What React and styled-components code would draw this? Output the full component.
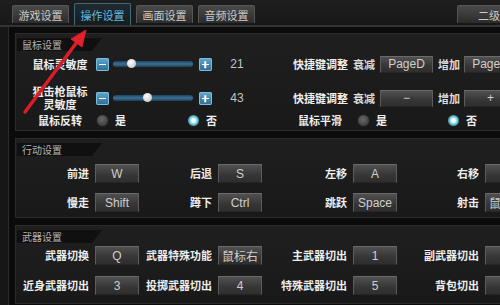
import styled, { createGlobalStyle } from "styled-components";

const GlobalStyle = createGlobalStyle`
  body {
    margin: 0;
    background: #0c0c0c;
    font-family: "Noto Sans CJK SC", "Noto Sans", sans-serif;
  }
`;

const Screen = styled.div`
  position: relative;
  width: 500px;
  height: 305px;
  overflow: hidden;
  background: #0b0b0b;
`;

const TabBar = styled.div`
  display: flex;
  align-items: flex-end;
  gap: 5px;
  width: 600px;
  height: 25px;
  padding-left: 12px;
  background: linear-gradient(#1e1e1e, #181818);
  border-bottom: 2px solid #343434;
`;

const Tab = styled.div`
  flex: none;
  box-sizing: border-box;
  width: ${(p) => p.$width || 57}px;
  height: ${(p) => (p.$active ? 22 : 18)}px;
  margin-bottom: ${(p) => (p.$active ? 0 : 2)}px;
  margin-left: ${(p) => p.$offset || 0}px;
  padding-left: ${(p) => p.$pl || 0}px;
  display: flex;
  align-items: center;
  justify-content: ${(p) => (p.$pl ? "flex-start" : "center")};
  font-size: 11px;
  color: ${(p) => (p.$active ? "#62bde6" : "#cacaca")};
  background: ${(p) =>
    p.$active
      ? "linear-gradient(#202b31, #151c20)"
      : "linear-gradient(#4a4a4a, #2b2b2b)"};
  border: 1px solid ${(p) => (p.$active ? "#3d6a7a" : "#555")};
  border-bottom: none;
  border-radius: 2px 2px 0 0;
`;

const Body = styled.div`
  display: flex;
  padding-top: 6px;
`;

const Rail = styled.div`
  flex: none;
  width: 8px;
  margin-top: -6px;
  height: 300px;
  background: #161616;
  border-right: 1px solid #2c2c2c;
`;

const Content = styled.div`
  display: flex;
  flex-direction: column;
  gap: 7px;
  width: 540px;
  margin-left: 6px;
`;

const Panel = styled.section`
  box-sizing: border-box;
  flex: none;
  display: flex;
  flex-direction: column;
  padding: 4px 0 ${(p) => p.$bottom || 4}px;
  background: linear-gradient(#1f1f1f, #191919);
  border: 1px solid #2b2b2b;
  border-right: none;
`;

const PanelTitle = styled.div`
  flex: none;
  width: 80px;
  height: 13px;
  margin-left: 1px;
  padding-left: 5px;
  font-size: 10px;
  line-height: 13px;
  color: #b4b4b4;
  background: #101010;
  clip-path: polygon(0 0, 100% 0, calc(100% - 10px) 100%, 0 100%);
`;

const Row = styled.div`
  flex: none;
  display: flex;
  align-items: center;
  height: ${(p) => p.$h || 18}px;
  margin-top: ${(p) => p.$mt || 0}px;
`;

const Label = styled.div`
  flex: none;
  box-sizing: border-box;
  width: ${(p) => p.$w}px;
  padding-left: ${(p) => p.$pl || 0}px;
  font-size: 11px;
  font-weight: 700;
  line-height: 13px;
  color: #eeeeee;
  text-align: ${(p) => p.$align || "center"};
  white-space: nowrap;
`;

const Small = styled.span`
  flex: none;
  margin-left: ${(p) => p.$ml || 0}px;
  font-size: 11px;
  font-weight: 700;
  color: #dcdcdc;
`;

const Step = styled.div`
  position: relative;
  flex: none;
  width: 13px;
  height: 13px;
  margin-left: ${(p) => p.$ml || 0}px;
  border-radius: 2px;
  background: linear-gradient(#62a8cf, #2b6b90);
  box-shadow: inset 0 0 0 1px #7cbbe0;
  &::before,
  &::after {
    content: "";
    position: absolute;
    left: 3px;
    top: 6px;
    width: 7px;
    height: 1.5px;
    background: #fff;
  }
  &::after {
    display: ${(p) => (p.$plus ? "block" : "none")};
    transform: rotate(90deg);
  }
`;

const Track = styled.div`
  position: relative;
  flex: none;
  width: 80px;
  height: 6px;
  margin-left: 4px;
  border-radius: 3px;
  background: linear-gradient(#1d435c, #3b7194 50%, #1b3d53);
`;

const Thumb = styled.div`
  position: absolute;
  top: -2px;
  width: 9px;
  height: 9px;
  margin-left: -4px;
  border-radius: 50%;
  background: radial-gradient(circle at 40% 35%, #ffffff, #b9b9b9);
`;

const Value = styled.div`
  flex: none;
  width: 50px;
  text-align: center;
  font-family: "Liberation Sans", sans-serif;
  font-size: 12px;
  color: #c4c4c4;
`;

const KeyButton = styled.div`
  flex: none;
  box-sizing: border-box;
  width: ${(p) => p.$w || 44}px;
  height: ${(p) => p.$h || 19}px;
  margin-left: ${(p) => p.$ml || 0}px;
  display: flex;
  align-items: center;
  justify-content: center;
  font-family: "Liberation Sans", "Noto Sans CJK SC", sans-serif;
  font-size: 12px;
  color: #cfcfcf;
  white-space: nowrap;
  overflow: hidden;
  background: linear-gradient(#505050, #363636 60%, #2e2e2e);
  border: 1px solid #5c5c5c;
  border-top-color: #6a6a6a;
  border-bottom-color: #262626;
`;

const RadioCell = styled.div`
  flex: none;
  display: flex;
  align-items: center;
  width: ${(p) => p.$w}px;
  padding-left: ${(p) => p.$pl || 0}px;
  box-sizing: border-box;
  gap: 7px;
  font-size: 11px;
  font-weight: 700;
  color: #eeeeee;
`;

const Radio = styled.span`
  flex: none;
  width: 11px;
  height: 11px;
  border-radius: 50%;
  box-shadow: 0 0 0 1px #202020;
  background: ${(p) =>
    p.$on
      ? "radial-gradient(circle, #f2feff 0 22%, #7fd4e6 45%, #2d6f82 80%)"
      : "radial-gradient(circle at 45% 40%, #6a6a6a, #3a3a3a 80%)"};
`;

const KeyGrid = styled.div`
  flex: none;
  display: grid;
  grid-template-columns: 79px 44px 79px 44px 91px 44px 88px 44px;
  grid-auto-rows: 19px;
  row-gap: ${(p) => p.$rowGap || 10}px;
  margin-top: ${(p) => p.$mt || 0}px;
  align-items: center;
`;

const KeyLabel = styled.div`
  padding-right: 6px;
  text-align: right;
  font-size: 11px;
  font-weight: 700;
  line-height: 13px;
  color: #eeeeee;
  white-space: nowrap;
`;

const Arrow = styled.svg`
  position: absolute;
  left: 0;
  top: 0;
  pointer-events: none;
`;

const moveKeys = [
  ["前进", "W"], ["后退", "S"], ["左移", "A"], ["右移", ""],
  ["慢走", "Shift"], ["蹲下", "Ctrl"], ["跳跃", "Space"], ["射击", "鼠标左"],
];

const weaponKeys = [
  ["武器切换", "Q"], ["武器特殊功能", "鼠标右"], ["主武器切出", "1"], ["副武器切出", ""],
  ["近身武器切出", "3"], ["投掷武器切出", "4"], ["特殊武器切出", "5"], ["背包切出", ""],
];

function SliderRow({ label, value, pos, minus, plus, h, mt }) {
  return (
    <Row $h={h} $mt={mt}>
      <Label $w={80} $pl={8}>{label}</Label>
      <Step />
      <Track>
        <Thumb style={{ left: `${pos}%` }} />
      </Track>
      <Step $ml={6} $plus />
      <Value>{value}</Value>
      <Label $w={85} $pl={31}>快捷键调整</Label>
      <Small $ml={6}>衰减</Small>
      <KeyButton $w={53} $h={17} $ml={5}>{minus}</KeyButton>
      <Small $ml={5}>增加</Small>
      <KeyButton $w={53} $h={17} $ml={4}>{plus}</KeyButton>
    </Row>
  );
}

function KeyPanel({ title, keys, mt, rowGap, bottom }) {
  return (
    <Panel $bottom={bottom}>
      <PanelTitle>{title}</PanelTitle>
      <KeyGrid $mt={mt} $rowGap={rowGap}>
        {keys.map(([label, key], i) => [
          <KeyLabel key={`l${i}`}>{label}</KeyLabel>,
          <KeyButton key={`k${i}`}>{key}</KeyButton>,
        ])}
      </KeyGrid>
    </Panel>
  );
}

export default function App() {
  return (
    <>
      <GlobalStyle />
      <Screen>
        <TabBar>
          <Tab>游戏设置</Tab>
          <Tab $active>操作设置</Tab>
          <Tab>画面设置</Tab>
          <Tab>音频设置</Tab>
          <Tab $offset={197} $width={84} $pl={20}>二级设置</Tab>
        </TabBar>
        <Body>
          <Rail />
          <Content>
            <Panel $bottom={3}>
              <PanelTitle>鼠标设置</PanelTitle>
              <SliderRow label="鼠标灵敏度" value="21" pos={22} minus="PageD" plus="PageU" h={18} mt={4} />
              <SliderRow
                label={<>狙击枪鼠标<br />灵敏度</>}
                value="43"
                pos={42}
                minus="−"
                plus="+"
                h={26}
                mt={12}
              />
              <Row $h={14} $mt={2}>
                <Label $w={80} $pl={8}>鼠标反转</Label>
                <RadioCell $w={92} $pl={1}><Radio />是</RadioCell>
                <RadioCell $w={105}><Radio $on />否</RadioCell>
                <Label $w={54}>鼠标平滑</Label>
                <RadioCell $w={101} $pl={11}><Radio />是</RadioCell>
                <RadioCell $w={80}><Radio $on />否</RadioCell>
              </Row>
            </Panel>
            <KeyPanel title="行动设置" keys={moveKeys} mt={8} rowGap={10} bottom={5} />
            <KeyPanel title="武器设置" keys={weaponKeys} mt={3} rowGap={11} bottom={8} />
          </Content>
        </Body>
        <Arrow width="100" height="120" viewBox="0 0 100 120">
          <line x1="25" y1="112" x2="77" y2="42" stroke="#d81e27" strokeWidth="3.5" strokeLinecap="round" />
          <polygon points="86,30 82,47 71,39" fill="#e0222b" stroke="#d81e27" strokeWidth="1" strokeLinejoin="round" />
        </Arrow>
      </Screen>
    </>
  );
}
